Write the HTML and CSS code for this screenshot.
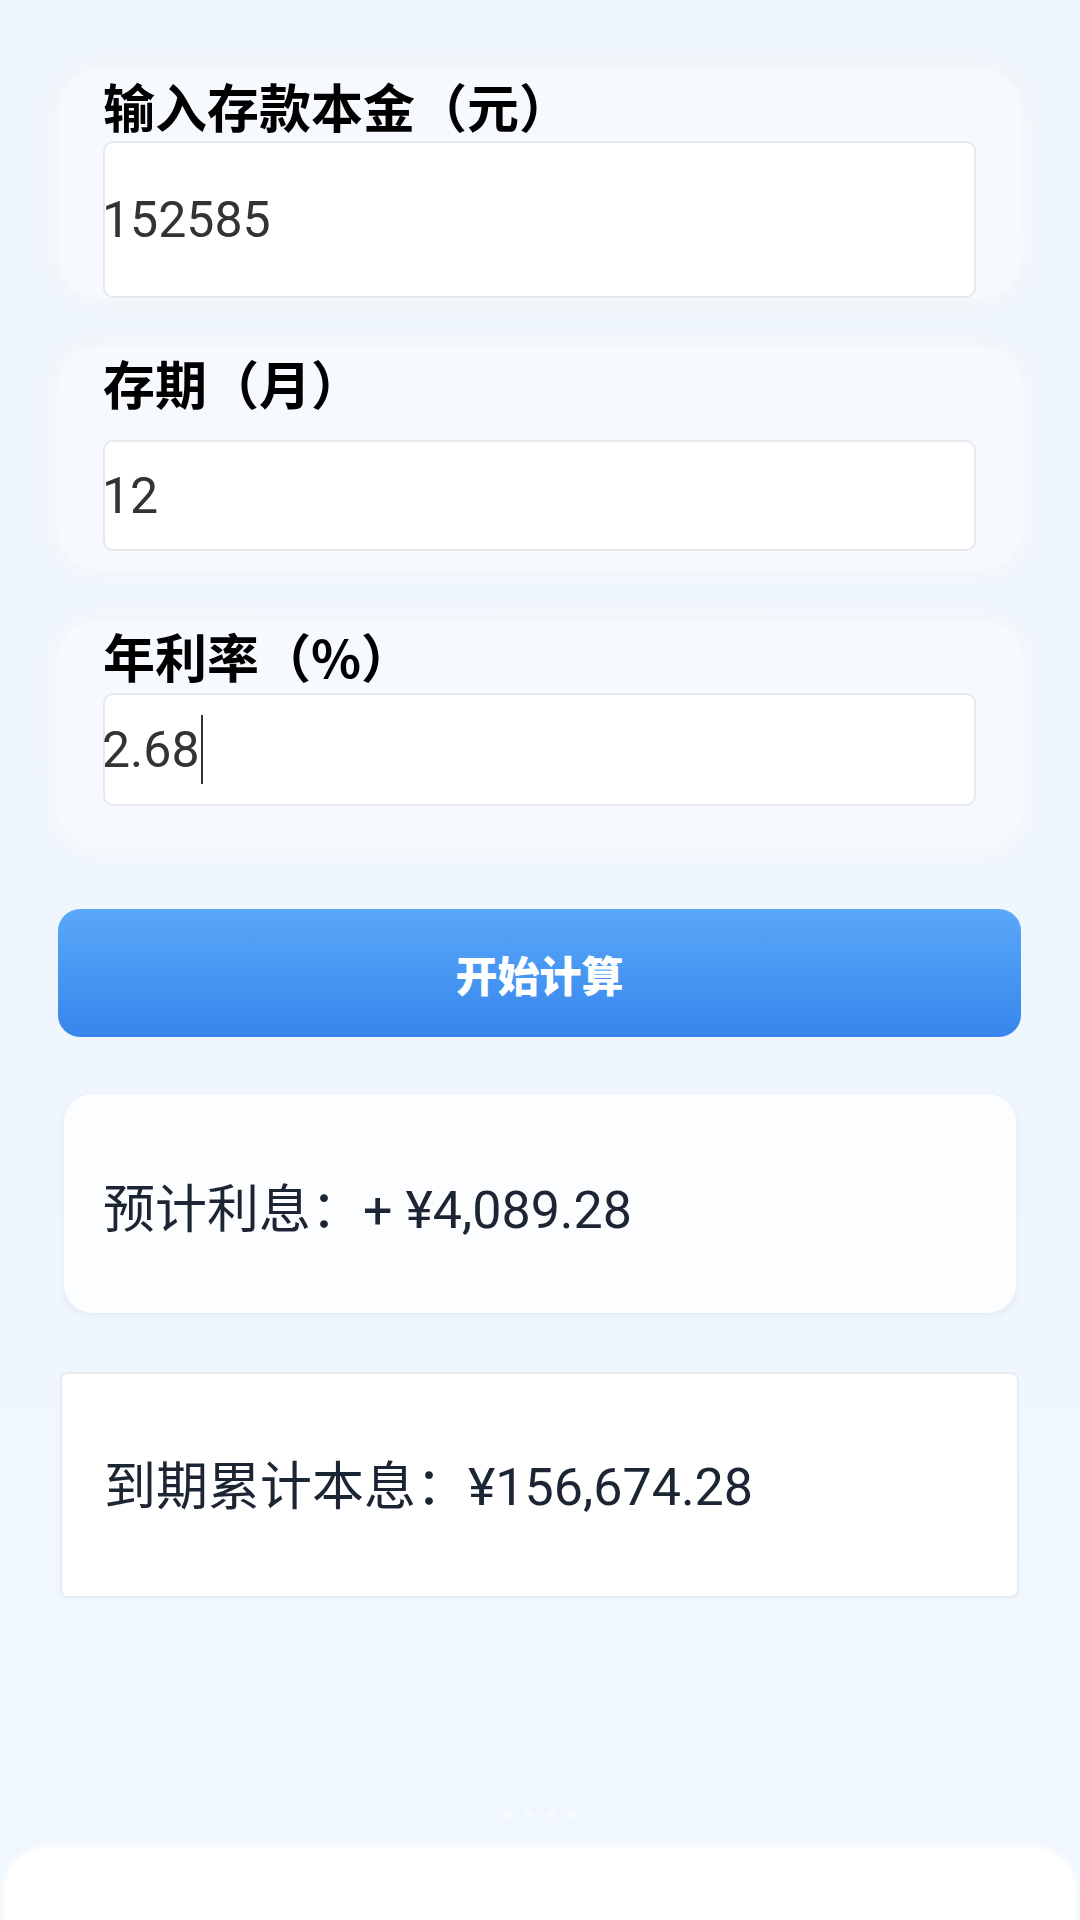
FILE: index.html
```html
<!DOCTYPE html>
<html lang="zh-CN">
<head>
<meta charset="utf-8">
<meta name="viewport" content="width=1080">
<title>存款利息计算</title>
<link rel="stylesheet" href="styles.css">
</head>
<body>
<main class="page">
  <section class="field field-1">
    <div class="label">输入存款本金（元）</div>
    <div class="input input-1">152585</div>
  </section>
  <section class="field field-2">
    <div class="label">存期（月）</div>
    <div class="input input-2">12</div>
  </section>
  <section class="field field-3">
    <div class="label">年利率（%）</div>
    <div class="input input-3">2.68<span class="caret"></span></div>
  </section>
  <button class="calc-btn" type="button">开始计算</button>
  <div class="result result-interest">
    <span class="result-text">预计利息：+ ¥4,089.28</span>
  </div>
  <div class="result result-total">
    <span class="result-text">到期累计本息：¥156,674.28</span>
  </div>
</main>
<div class="dots">
  <span class="dot"></span><span class="dot"></span><span class="dot"></span><span class="dot"></span>
</div>
<div class="sheet"></div>
</body>
</html>
```
FILE: styles.css
```css
html, body {
  margin: 0;
  padding: 0;
}
body {
  width: 1080px;
  height: 1920px;
  overflow: hidden;
  background: linear-gradient(180deg, #eef4fb 0%, #eff6fd 60%, #f0f7fe 100%);
  font-family: Roboto, "Noto Sans CJK SC", sans-serif;
}
.page {
  padding: 70px 58px 0 58px;
  display: flex;
  flex-direction: column;
}
.field {
  background: rgba(255, 255, 255, 0.45);
  border-radius: 40px;
  box-shadow: 0 0 22px 6px rgba(255, 255, 255, 0.45);
  padding: 0 46px 0 45px;
  display: flex;
  flex-direction: column;
}
.field-1 { padding-top: 2px; padding-bottom: 0; }
.field-2 { margin-top: 49px; padding-top: 2px; padding-bottom: 19px; }
.field-3 { margin-top: 51px; padding-top: 1px; padding-bottom: 43px; }
.label {
  font-family: "Noto Sans CJK SC", Roboto, sans-serif;
  font-weight: 700;
  font-size: 52px;
  line-height: 68px;
  color: #000;
}
.input {
  background: #fff;
  border: 2px solid #e6e9ee;
  border-radius: 10px;
  display: flex;
  align-items: center;
  padding: 0;
  text-indent: -3px;
  font-family: Roboto, "Noto Sans CJK SC", sans-serif;
  font-size: 50px;
  color: #333;
}
.input-1 { margin-top: 1px; height: 153px; }
.input-2 { margin-top: 23px; height: 107px; }
.input-3 { margin-top: 3px; height: 109px; }
.caret {
  display: inline-block;
  width: 2px;
  height: 69px;
  background: #333;
  margin-left: 1px;
}
.calc-btn {
  margin: 60px 1px 0 0;
  height: 128px;
  border: none;
  border-radius: 22px;
  background: linear-gradient(180deg, #5aa8f8 0%, #4797f3 50%, #3886ec 100%);
  color: #fff;
  font-family: "Noto Sans CJK SC", sans-serif;
  font-weight: 900;
  font-size: 42px;
  padding: 0;
}
.result {
  background: #fff;
  display: flex;
  align-items: flex-start;
}
.result-text {
  font-family: Roboto, "Noto Sans CJK SC", sans-serif;
  font-size: 52px;
  line-height: 70px;
  color: #1c2533;
}
.result-interest {
  margin: 57px 6px 0 6px;
  height: 219px;
  box-sizing: border-box;
  padding: 82px 0 0 39px;
  border-radius: 28px;
  background: #fcfdfe;
  box-shadow: 0 3px 6px rgba(160, 180, 200, 0.18);
}
.result-total {
  margin: 59px 3px 0 2px;
  height: 226px;
  box-sizing: border-box;
  padding: 79px 0 0 42px;
  border: 2px solid #e7ecf1;
  border-radius: 8px;
}
.dots {
  margin-top: 210px;
  display: flex;
  justify-content: center;
  gap: 14px;
  height: 14px;
  align-items: center;
}
.dot {
  width: 8px;
  height: 8px;
  border-radius: 50%;
  background: rgba(255, 255, 255, 0.45);
}
.sheet {
  margin: 26px 4px 0 4px;
  height: 120px;
  background: #fff;
  border-radius: 44px 44px 0 0;
  box-shadow: 0 -2px 10px rgba(255, 255, 255, 0.9);
}
```
